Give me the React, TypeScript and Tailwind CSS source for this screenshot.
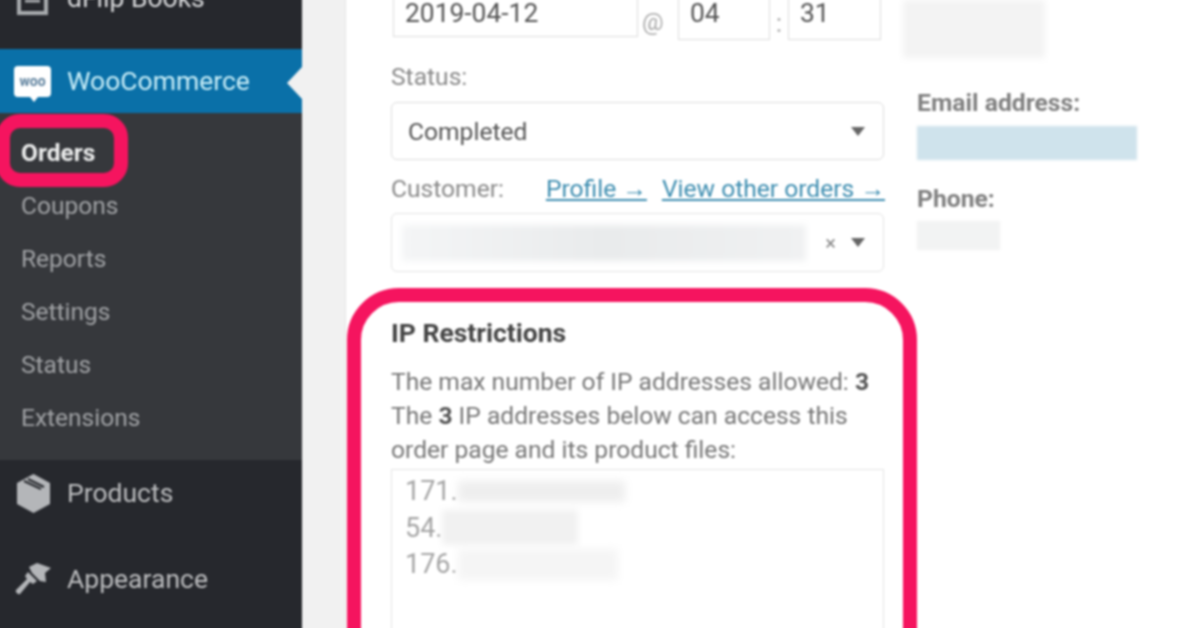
const subItems = ["Coupons", "Reports", "Settings", "Status", "Extensions"];

const Caret = () => (
  <svg width="14" height="9" viewBox="0 0 14 9" className="shrink-0">
    <path d="M0 0h14L7 9z" fill="#666" />
  </svg>
);

// rows carry 4px of extra left padding: the page blur is bled past the window edge
const Sidebar = () => (
  <aside className="relative h-[636px] w-[306px] shrink-0 overflow-hidden bg-[#26282d] text-[26.5px] text-[#d8d9db]">
    <div className="h-[53px] overflow-hidden">
      <div className="-mt-[30px] flex h-[64px] items-center gap-[19px] pl-[21px]">
        <svg width="31" height="34" viewBox="0 0 31 34" fill="none" stroke="#a7aaad" strokeWidth="4">
          <path d="M2 2h27v30H2z" />
          <path d="M8 20h15" strokeWidth="3" />
        </svg>
        <span>dFlip Books</span>
      </div>
    </div>

    <div className="relative flex h-[64px] items-center bg-[#0a70a8] pl-[18px] text-[#c9eef8]">
      <div className="relative flex h-[31px] w-[37px] items-center justify-center rounded-[4px] bg-white">
        <span className="text-[14px] font-bold leading-none text-[#5b7f9c]">woo</span>
        <span className="absolute -bottom-[5px] left-[16px] h-0 w-0 border-x-[4px] border-t-[5px] border-x-transparent border-t-white" />
      </div>
      <span className="ml-[16px]">WooCommerce</span>
      <span className="absolute right-0 top-[18px] h-0 w-0 border-y-[16px] border-r-[15px] border-y-transparent border-r-[#f1f1f1]" />
    </div>

    <div className="h-[347px] bg-[#36383c] pt-[14px] text-[24.5px] text-[#a0a2a5]">
      <div className="relative flex h-[53px] items-center pl-[25px] font-bold text-[#eceded]">
        Orders
        <span className="absolute left-0 -top-[13px] h-[73px] w-[132px] rounded-[24px] border-[14px] border-[#f5145f]" />
      </div>
      {subItems.map((item) => (
        <div key={item} className="flex h-[53px] items-center pl-[25px]">
          {item}
        </div>
      ))}
    </div>

    <div className="flex h-[66px] items-center gap-[17px] pl-[21px] text-[#bcbdbf]">
      <svg width="33" height="39" viewBox="0 0 33 39" fill="#b4b6b9">
        <path d="M16.5 0 33 9v21l-16.5 9L0 30V9z" />
        <path d="M7 7l17 8M11 5l16 8" stroke="#26282d" strokeWidth="2" fill="none" />
      </svg>
      <span>Products</span>
    </div>
    <div className="mt-[20px] flex h-[66px] items-center gap-[16px] pl-[19px] text-[#bcbdbf]">
      <svg width="36" height="32" viewBox="0 0 36 32" fill="#b4b6b9">
        <path d="M14 4 22 0l14 5-6 5 1 9-6-1-8-8z" />
        <path d="M13 9l9 9-4 3-3-2L5 31c-2 1-5-2-4-4l11-11-2-3z" />
      </svg>
      <span>Appearance</span>
    </div>
  </aside>
);

const OrderForm = () => (
  <div className="w-[493px] shrink-0 text-[24.6px] text-[#444]">
    <div className="-mt-[20px] flex h-[60px] items-start text-[26.4px] text-[#555]">
      <div className="ml-[2px] flex h-[57px] w-[245px] items-center border border-[#ddd] pl-[11px] pt-[11px]">2019-04-12</div>
      <span className="ml-[4px] mt-[24px] w-[36px] text-[24px] text-[#aaa]">@</span>
      <div className="flex h-[60px] w-[92px] items-center border border-[#ddd] pl-[11px] pt-[7px]">04</div>
      <span className="w-[18px] pt-[24px] text-center text-[#aaa]">:</span>
      <div className="flex h-[60px] w-[93px] items-center border border-[#ddd] pl-[11px] pt-[7px]">31</div>
    </div>

    <div className="mt-[22px] h-[30px] leading-[30px] text-[#8a8a8a]">Status:</div>
    <div className="mt-[10px] flex h-[58px] items-center justify-between rounded-[6px] border border-[#ddd] pl-[16px] pr-[18px] text-[#555]">
      <span className="pt-[2px]">Completed</span>
      <Caret />
    </div>

    <div className="mt-[14px] flex h-[30px] items-center justify-between leading-[30px] text-[#8a8a8a]">
      <span>Customer:</span>
      <span className="-mr-[1px] flex gap-[15px] text-[#3d8db0] underline">
        <span>Profile →</span>
        <span>View other orders →</span>
      </span>
    </div>
    <div className="mt-[9px] flex h-[59px] items-center rounded-[6px] border border-[#e3e3e3] pl-[10px] pr-[18px]">
      <div className="h-[36px] w-[406px] bg-linear-to-r from-[#f4f5f6] via-[#e9ebec] to-[#f0f1f2] blur-[3px]" />
      <span className="ml-[19px] text-[20px] leading-none text-[#888]">×</span>
      <span className="ml-[15px]">
        <Caret />
      </span>
    </div>

    <section className="-ml-[44px] -mr-[33px] mt-[16px] h-[400px] rounded-[52px] border-[14px] border-[#f5145f] pl-[30px] pr-[19px] pt-[16px]">
      <h2 className="h-[30px] text-[26.5px] font-bold leading-[30px] text-[#444]">IP Restrictions</h2>
      <p className="mt-[17px] whitespace-nowrap leading-[34px] text-[#777]">
        The max number of IP addresses allowed: <b className="text-[#555]">3</b>
        <br />
        The <b className="text-[#555]">3</b> IP addresses below can access this
        <br />
        order page and its product files:
      </p>
      <div className="mt-[2px] h-[300px] border border-[#e5e5e5] pl-[13px] pt-[3px] text-[27px] text-[#a5a5a5]">
        <div className="flex h-[36.5px] items-center">
          171.
          <div className="h-[21px] w-[167px] bg-[#eeeeee] blur-[4px]" />
        </div>
        <div className="flex h-[36.5px] items-center">
          54.
          <div className="h-[35px] w-[136px] bg-[#f1f1f1] blur-[3px]" />
        </div>
        <div className="flex h-[36.5px] items-center">
          176.
          <div className="h-[31px] w-[160px] bg-[#f5f5f5] blur-[4px]" />
        </div>
      </div>
    </section>
  </div>
);

const CustomerInfo = () => (
  <div className="ml-[33px] text-[24.7px] font-bold text-[#808080]">
    <div className="-ml-[14px] h-[58px] w-[142px] bg-[#f3f3f3] blur-[3px]" />
    <div className="mt-[30px] h-[30px] leading-[30px]">Email address:</div>
    <div className="mt-[8px] h-[34px] w-[220px] bg-[#cfe3ec] blur-[1px]" />
    <div className="mt-[24px] h-[30px] leading-[30px]">Phone:</div>
    <div className="mt-[7px] h-[29px] w-[83px] bg-[#f2f3f3] blur-[1px]" />
  </div>
);

export default function App() {
  return (
    <div className="h-[628px] w-[1196px] overflow-hidden">
      <div
        className="-m-[4px] flex h-[636px] w-[1204px] bg-[#f1f1f1] blur-[1px]"
        style={{ fontFamily: "Roboto, 'Liberation Sans', sans-serif" }}
      >
        <Sidebar />
        <div className="w-[43px] shrink-0" />
        <main className="flex flex-1 overflow-hidden border-l border-[#e5e5e5] bg-white pl-[45px] pt-[4px]">
          <div className="flex items-start">
            <OrderForm />
            <CustomerInfo />
          </div>
        </main>
      </div>
    </div>
  );
}
